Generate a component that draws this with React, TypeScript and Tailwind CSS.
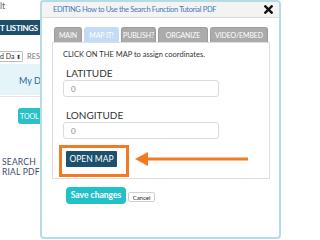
import React from 'react';

const tabs = [
  { label: 'MAIN', w: 'w-[28px]' },
  { label: 'MAP IT!', w: 'w-[35px]', active: true },
  { label: 'PUBLISH?', w: 'w-[35px]' },
  { label: 'ORGANIZE', w: 'w-[50px]' },
  { label: 'VIDEO/EMBED', w: 'w-[58px]' },
];

const BackgroundPage: React.FC = () => (
  <div className="w-[40px] h-[240px] shrink-0 overflow-hidden bg-white flex flex-col">
    {/* top link */}
    <div className="h-[20px] pt-[1px] text-[9px] leading-[10px] text-[#666] whitespace-nowrap">lt</div>
    {/* listings bar */}
    <div className="h-[15px] bg-[#1d4f6c] flex items-center whitespace-nowrap">
      <span className="text-[8px] font-bold text-white tracking-[-0.3px]">T LISTINGS</span>
    </div>
    {/* filter row */}
    <div className="h-[29px] flex items-end pb-[2px] gap-[4px] whitespace-nowrap">
      <div className="h-[11px] w-[23px] shrink-0 border border-[#bbb] rounded-r-[2px] border-l-0 flex items-center justify-between pr-[1px] text-[7px] leading-none text-[#333]">
        <span>d Da</span>
        <span className="text-[6px]">⬍</span>
      </div>
      <span className="text-[7.5px] text-[#777]">RES</span>
    </div>
    {/* blue band */}
    <div className="h-[31px] bg-[#e4f4f8] flex items-center pl-[19px] whitespace-nowrap">
      <span className="text-[9px] text-[#2f6697] mt-[2px]">My D</span>
    </div>
    <div className="h-[1px] bg-[#e6e6e6] mt-[1px]" />
    {/* tool button */}
    <div className="mt-[11px] ml-[18px] h-[16px] bg-[#28c1c9] rounded-l-[3px] flex items-center pl-[2px] whitespace-nowrap">
      <span className="text-[7px] text-white">TOOL</span>
    </div>
    {/* title */}
    <div className="mt-[33px] pl-[2px] text-[8.5px] leading-[10px] text-[#3c4a6c] whitespace-nowrap tracking-[0.2px]">
      <div>SEARCH</div>
      <div>RIAL PDF</div>
    </div>
  </div>
);

const EditModal: React.FC = () => (
  <div className="w-[241px] h-[239px] shrink-0 border-2 border-[#b5dbe5] rounded-[4px] bg-white flex flex-col overflow-hidden">
    {/* header */}
    <div className="h-[16px] shrink-0 bg-[#f3f3f3] border-b border-[#dcdcdc] flex items-center justify-between pl-[11px] pr-[6px]">
      <span className="text-[7.5px] text-[#3b7dbd] tracking-[-0.35px] whitespace-nowrap">
        EDITING How to Use the Search Function Tutorial PDF
      </span>
      <svg width="9" height="9" viewBox="0 0 10 10">
        <path d="M1.5 1.5 L8.5 8.5 M8.5 1.5 L1.5 8.5" stroke="#111" strokeWidth="2.6" strokeLinecap="square" />
      </svg>
    </div>

    {/* body */}
    <div className="pl-[10px] pt-[9px] flex flex-col">
      {/* tabs */}
      <div className="flex gap-[2px] pl-[2px] h-[15px] items-end">
        {tabs.map((t) => (
          <div
            key={t.label}
            className={`${t.w} h-[15px] rounded-t-[3px] border border-b-0 flex items-center justify-center text-[7px] tracking-[-0.1px] text-white whitespace-nowrap ${
              t.active ? 'bg-[#c4dbf6] border-[#c4dbf6]' : 'bg-[#ababab] border-[#9d9d9d]'
            }`}
          >
            {t.label}
          </div>
        ))}
      </div>

      {/* panel */}
      <div className="w-[218px] h-[137px] border border-[#dedede] pl-[10px] pt-[7px] flex flex-col">
        <div className="h-[10px] text-[7.5px] leading-[10px] text-[#333] whitespace-nowrap">
          CLICK ON THE MAP to assign coordinates.
        </div>
        <div className="mt-[7px] pl-[3px] h-[12px] text-[10px] leading-[12px] text-[#333]">LATITUDE</div>
        <div className="mt-[1px] w-[156px] h-[17px] border border-[#dcdcdc] rounded-[3px] flex items-center pl-[7px] text-[8px] text-[#888]">
          0
        </div>
        <div className="mt-[12px] pl-[3px] h-[12px] text-[10px] leading-[12px] text-[#333]">LONGITUDE</div>
        <div className="mt-[1px] w-[156px] h-[17px] border border-[#dcdcdc] rounded-[3px] flex items-center pl-[7px] text-[8px] text-[#888]">
          0
        </div>
        <div className="mt-[6px] -ml-[4px] flex items-center">
          <div className="w-[70px] h-[32px] border-[3px] border-[#f47920] flex items-start pt-[3px] pl-[4px]">
            <div className="w-[51px] h-[16px] bg-[#1b516e] rounded-[1px] flex items-center justify-center text-[8.5px] text-white whitespace-nowrap">
              OPEN MAP
            </div>
          </div>
          <svg width="113" height="16" viewBox="0 0 113 16" className="ml-[6px] -mt-[4px]">
            <path d="M0 8 L13 1 L13 15 Z" fill="#f47920" />
            <rect x="12" y="6.5" width="101" height="3" fill="#f47920" />
          </svg>
        </div>
      </div>

      {/* actions */}
      <div className="mt-[8px] pl-[14px] flex items-center gap-[2px]">
        <div className="w-[60px] h-[17px] bg-[#22c1ca] rounded-[4px] flex items-center justify-center text-[8.5px] font-bold text-white whitespace-nowrap">
          Save changes
        </div>
        <div className="w-[27px] h-[10px] border border-[#cfcfcf] rounded-[2px] bg-white flex items-center justify-center text-[6px] text-[#222] mt-[3px]">
          Cancel
        </div>
      </div>
    </div>
  </div>
);

export default function App() {
  return (
    <div className="w-[320px] h-[240px] bg-white flex overflow-hidden" style={{ fontFamily: 'Lato, "Open Sans", sans-serif' }}>
      <BackgroundPage />
      <EditModal />
    </div>
  );
}
